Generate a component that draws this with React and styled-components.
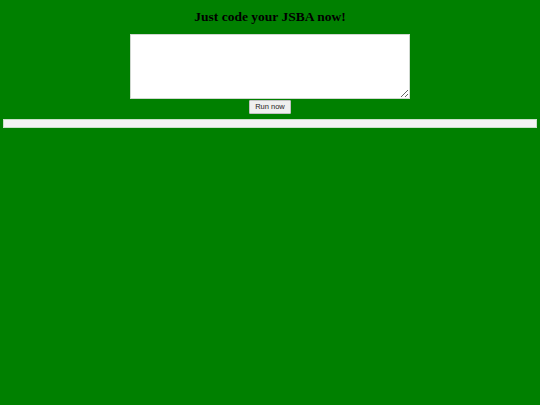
import React from 'react';
import styled, { createGlobalStyle } from 'styled-components';

const GlobalStyle = createGlobalStyle`
  html, body {
    margin: 0;
    padding: 0;
    background-color: green;
  }
  body {
    font-family: "Liberation Serif", "Times New Roman", serif;
  }
`;

const Page = styled.div`
  display: flex;
  flex-direction: column;
  align-items: center;
  padding: 9px 3px 0;
  min-height: 405px;
  box-sizing: border-box;
`;

const Title = styled.h2`
  margin: 0;
  font-size: 13.5px;
  line-height: 16px;
  font-weight: bold;
  color: #000;
`;

const Editor = styled.textarea`
  margin-top: 9px;
  width: 280px;
  height: 65px;
  box-sizing: border-box;
  border: 1px solid #cfd8cf;
  background: #fff;
  padding: 2px;
  font-family: "Liberation Mono", monospace;
  font-size: 7.5px;
  resize: both;
  outline: none;
`;

const RunButton = styled.button`
  margin-top: 1px;
  width: 42px;
  height: 14px;
  padding: 0;
  box-sizing: border-box;
  border: 1px solid #c2c2c2;
  border-radius: 1px;
  background: #efefef;
  color: #222;
  font-family: "Liberation Sans", Arial, sans-serif;
  font-size: 7.5px;
  line-height: 12px;
  cursor: pointer;
`;

const Output = styled.div`
  margin-top: 5px;
  align-self: stretch;
  height: 9px;
  box-sizing: border-box;
  border: 1px solid #c8e0c8;
  background: #f3f3f3;
`;

const App = () => {
  return (
    <>
      <GlobalStyle />
      <Page>
        <Title>Just code your JSBA now!</Title>
        <Editor />
        <RunButton type='button'>Run now</RunButton>
        <Output />
      </Page>
    </>
  );
};

export default App;
